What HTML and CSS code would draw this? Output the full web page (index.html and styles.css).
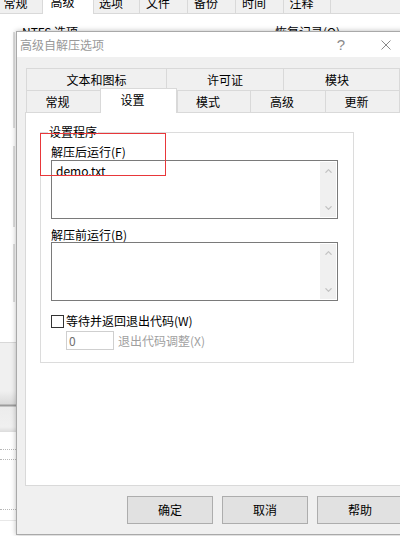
FILE: index.html
```html
<!DOCTYPE html>
<html lang="zh-CN">
<head>
<meta charset="utf-8">
<title>高级自解压选项</title>
<link rel="stylesheet" href="styles.css">
</head>
<body>
<div class="screen">
  <div class="bgwin">
    <div class="bgtabs">
      <div class="bgtab t1">常规</div>
      <div class="bgtab t2 sel">高级</div>
      <div class="bgtab t3">选项</div>
      <div class="bgtab t4">文件</div>
      <div class="bgtab t4">备份</div>
      <div class="bgtab t4">时间</div>
      <div class="bgtab t5">注释</div>
      <div class="bgfill"></div>
    </div>
    <div class="bgbody">
      <div class="bgleft">
        <div class="seg s1"></div>
        <div class="seg s2"></div>
        <div class="seg s3"></div>
        <div class="gblock"></div>
        <div class="dots d1"></div>
        <div class="dots d2"></div>
        <div class="dots d3"></div>
        <div class="faint"></div>
      </div>
      <div class="bgmain">
        <div class="bgrow"><span class="ntfs">NTFS 选项</span><span>恢复记录(Q)</span></div>
      </div>
    </div>
  </div>

  <div class="dialog">
    <div class="titlebar">
      <span class="title">高级自解压选项</span>
      <span class="help">?</span>
      <span class="close"><svg width="10" height="10" viewBox="0 0 10 10"><path d="M0.5 0.5 L9.5 9.5 M9.5 0.5 L0.5 9.5" stroke="#8a8a8a" stroke-width="1" fill="none"/></svg></span>
    </div>
    <div class="dbody">
      <div class="tabrow row1">
        <div class="tab">文本和图标</div>
        <div class="tab">许可证</div>
        <div class="tab last pr9">模块</div>
      </div>
      <div class="tabrow row2">
        <div class="tab">常规</div>
        <div class="tab sel">设置</div>
        <div class="tab">模式</div>
        <div class="tab">高级</div>
        <div class="tab last">更新</div>
      </div>
      <div class="panel">
        <div class="group">
          <span class="legend">设置程序</span>
          <div class="lbl">解压后运行(F)</div>
          <div class="textbox">
            <div class="tbtext">demo.txt</div>
            <div class="sbar">
              <svg width="7" height="4" viewBox="0 0 7 4"><polyline points="0.5,3.7 3.5,0.7 6.5,3.7" fill="none" stroke="#c2c2c2" stroke-width="1.2"/></svg>
              <svg width="7" height="4" viewBox="0 0 7 4"><polyline points="0.5,0.3 3.5,3.3 6.5,0.3" fill="none" stroke="#c2c2c2" stroke-width="1.2"/></svg>
            </div>
          </div>
          <div class="lbl lbl2">解压前运行(B)</div>
          <div class="textbox">
            <div class="tbtext"></div>
            <div class="sbar">
              <svg width="7" height="4" viewBox="0 0 7 4"><polyline points="0.5,3.7 3.5,0.7 6.5,3.7" fill="none" stroke="#c2c2c2" stroke-width="1.2"/></svg>
              <svg width="7" height="4" viewBox="0 0 7 4"><polyline points="0.5,0.3 3.5,3.3 6.5,0.3" fill="none" stroke="#c2c2c2" stroke-width="1.2"/></svg>
            </div>
          </div>
          <div class="chkrow"><span class="chk"></span><span>等待并返回退出代码(W)</span></div>
          <div class="exitrow"><span class="numbox">0</span><span class="dis">退出代码调整(X)</span></div>
          <div class="mark"></div>
        </div>
      </div>
      <div class="btnrow">
        <div class="btn">确定</div>
        <div class="btn">取消</div>
        <div class="btn">帮助</div>
      </div>
    </div>
  </div>
</div>
</body>
</html>
```
FILE: styles.css
```css
* { box-sizing: border-box; }
html, body { margin: 0; padding: 0; }
body {
  width: 400px;
  height: 536px;
  overflow: hidden;
  background: #fff;
  font-family: "Noto Sans CJK SC", "Liberation Sans", sans-serif;
  font-size: 12px;
  color: #000;
}
.screen { position: relative; width: 400px; height: 536px; overflow: hidden; }

/* background window */
.bgwin { margin-top: -8px; }
.bgtabs { display: flex; height: 22px; }
.bgtab {
  flex: none;
  height: 22px;
  line-height: 21px;
  background: #f0f0f0;
  border-right: 1px solid #d9d9d9;
  border-bottom: 1px solid #d9d9d9;
  text-align: center;
  padding-right: 11px;
  white-space: nowrap;
}
.bgtab.t1 { width: 43px; }
.bgtab.t2 { width: 51px; }
.bgtab.t3 { width: 46px; }
.bgtab.t4 { width: 48px; }
.bgtab.t5 { width: 47px; }
.bgtab.sel { background: #fff; border-bottom: none; line-height: 19px; }
.bgfill { flex: 1; background: #f0f0f0; border-bottom: 1px solid #d9d9d9; }
.bgbody { display: flex; }
.bgleft { width: 16px; flex: none; }
.seg { width: 15px; border-right: 2px solid #dedede; }
.s1 { margin-top: 18px; height: 96px; }
.s2 { margin-top: 18px; height: 81px; }
.s3 { margin-top: 17px; height: 58px; }
.gblock {
  margin-top: 40px;
  height: 90px;
  border-top: 1px solid #d8d8d8;
  background: linear-gradient(to bottom, #f0f0f0 0, #f0f0f0 48px, #dadada 61px, #9c9c9c 62px, #9c9c9c 63px, #ececec 64px, #f0f0f0 84px, #dcdcdc 89px);
}
.dots { height: 0; border-top: 1px dotted #b8b8b8; }
.d1 { margin-top: 17px; }
.d2 { margin-top: 9px; }
.d3 { margin-top: 49px; }
.faint { margin-top: 10px; height: 0; border-top: 1px solid #e8e8e8; }
.bgmain { flex: 1; padding-left: 6px; }
.bgrow { margin-top: 10px; line-height: 16px; display: flex; white-space: nowrap; }
.ntfs { width: 253px; }

/* dialog window */
.dialog {
  position: absolute;
  left: 16px;
  top: 31px;
  width: 394px;
  background: #f0f0f0;
  border: 1px solid #a9a9a9;
  box-shadow: 0 0 5px rgba(0, 0, 0, 0.28);
}
.titlebar {
  height: 25px;
  background: #fff;
  display: flex;
  align-items: center;
  padding-left: 3px;
}
.title { flex: 1; color: #999; line-height: 16px; }
.help {
  width: 14px;
  margin-right: 15px;
  text-align: center;
  color: #8a8a8a;
  font-family: "Liberation Sans", sans-serif;
  font-size: 15px;
  line-height: 16px;
}
.close { width: 46px; display: flex; justify-content: center; align-items: center; }
.dbody { padding: 11px 8px 10px 8px; }

.tabrow { display: grid; grid-template-rows: 22px; height: 22px; margin-left: 1px; width: 374px; }
.row1 { grid-template-columns: 140px 117px 1fr; }
.row2 { grid-template-columns: 74px 77px 73px 75px 1fr; }
.tab {
  border-left: 1px solid #d9d9d9;
  border-top: 1px solid #d9d9d9;
  text-align: center;
  line-height: 21px;
  white-space: nowrap;
}
.tab.last { border-right: 1px solid #d9d9d9; }
.tab.pr9 { padding-right: 9px; }
.row2 .tab { padding-right: 12px; }
.tab.sel {
  position: relative;
  background: #fff;
  margin-top: -2px;
  height: 25px;
  border-right: 1px solid #d9d9d9;
}

.panel {
  width: 377px;
  height: 374px;
  background: #fff;
  border: 1px solid #d9d9d9;
  padding: 19px 0 0 14px;
}
.group {
  position: relative;
  width: 314px;
  height: 231px;
  border: 1px solid #dcdcdc;
  padding: 11px 0 0 10px;
}
.legend {
  position: absolute;
  top: -9px;
  left: 7px;
  padding: 0 1px;
  background: #fff;
  line-height: 16px;
}
.lbl { line-height: 16px; }
.lbl2 { margin-top: 9px; line-height: 14px; }
.textbox {
  width: 287px;
  height: 59px;
  border: 1px solid #7a7a7a;
  background: #fff;
  display: flex;
}
.tbtext { flex: 1; padding: 2px 4px; line-height: 16px; }
.sbar {
  width: 16px;
  margin: 1px 1px 1px 0;
  background: #f0f0f0;
  display: flex;
  flex-direction: column;
  justify-content: space-between;
  align-items: center;
  padding: 7px 0;
}
.sbar svg { display: block; }
.chkrow { display: flex; align-items: center; margin-top: 12px; height: 16px; line-height: 16px; }
.chk { width: 13px; height: 13px; border: 1px solid #333; background: #fff; margin-right: 2px; flex: none; }
.exitrow { display: flex; align-items: center; margin-top: 2px; padding-left: 15px; }
.numbox {
  width: 48px;
  height: 19px;
  border: 1px solid #cfcfcf;
  background: #fff;
  padding-left: 2px;
  line-height: 17px;
  color: #707070;
}
.dis { color: #a0a0a0; margin-left: 4px; line-height: 16px; }
.mark {
  position: absolute;
  left: -1px;
  top: 0;
  width: 126px;
  height: 43px;
  border: 1px solid #e8373a;
}

.btnrow { display: flex; gap: 9px; margin: 10px 0 0 102px; }
.btn {
  flex: none;
  width: 86px;
  height: 28px;
  border: 1px solid #adadad;
  background: #e1e1e1;
  display: flex;
  align-items: center;
  justify-content: center;
  line-height: 16px;
}
```
